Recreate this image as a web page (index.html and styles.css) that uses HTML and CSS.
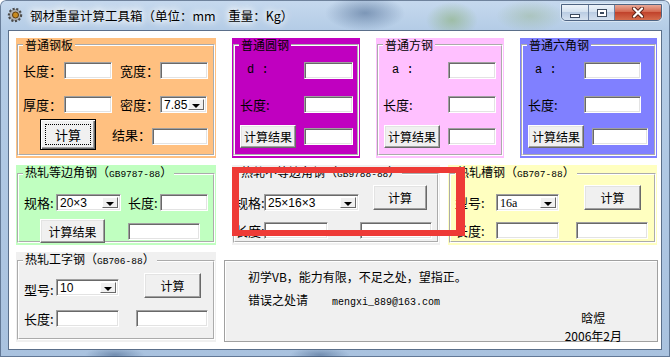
FILE: index.html
```html
<!DOCTYPE html>
<html>
<head>
    <meta charset="utf-8">
    <title>钢材重量计算工具箱</title>
    <link rel="stylesheet" href="styles.css">
</head>
<body>
    <div class="window">
        <div class="titlebar">
            <svg class="app-icon" width="16" height="16" viewBox="0 0 16 16">
                <circle cx="8" cy="8" r="6" fill="#9a9a9a" stroke="#4a4a4a" stroke-width="2.4" stroke-dasharray="2 1.6"/>
                <circle cx="8" cy="8" r="5" fill="#b0b0b0"/>
                <circle cx="8.5" cy="8" r="3" fill="#c98a1e" stroke="#5a3a10" stroke-width="1"/>
            </svg>
            <div class="title">钢材重量计算工具箱（单位：mm　重量：Kg）</div>
            <div class="caption-btns">
                <div class="cb cb-min"><i></i></div>
                <div class="cb cb-max"><i></i></div>
                <div class="cb cb-close">
                    <svg width="14" height="11" viewBox="0 0 14 11">
                        <path d="M3 1.5 L11 9.5 M11 1.5 L3 9.5" stroke="#5a2218" stroke-width="4" stroke-linecap="round"/>
                        <path d="M3 1.5 L11 9.5 M11 1.5 L3 9.5" stroke="#fff" stroke-width="2.2" stroke-linecap="round"/>
                    </svg>
                </div>
            </div>
        </div>

        <div class="client">
            <!-- first row: plate, round, square, hexagon -->
            <div class="row row1">
                <div class="group plate w200">
                    <fieldset>
                        <legend>普通钢板</legend>
                        <div class="r mt10">
                            <span class="lbl ml4 w41">长度：</span>
                            <input class="txt w48">
                            <span class="lbl ml8 w40">宽度：</span>
                            <input class="txt w48">
                        </div>
                        <div class="r mt17">
                            <span class="lbl ml4 w41">厚度：</span>
                            <input class="txt w48">
                            <span class="lbl ml8 w40">密度：</span>
                            <div class="combo w47"><span>7.85</span><i class="drop"></i></div>
                        </div>
                        <div class="r mt6">
                            <button class="btn default ml21 w56 h31">计算</button>
                            <span class="lbl ml16 w40">结果：</span>
                            <input class="txt w56 mt4">
                        </div>
                    </fieldset>
                </div>

                <div class="group round w128">
                    <fieldset>
                        <legend>普通圆钢</legend>
                        <div class="r mt10">
                            <span class="lbl mono ml12 w57">d :</span>
                            <input class="txt w49">
                        </div>
                        <div class="r mt17">
                            <span class="lbl ml5 w64">长度:</span>
                            <input class="txt w49">
                        </div>
                        <div class="r mt12">
                            <button class="btn ml5 w56 h23">计算结果</button>
                            <input class="txt ml8 w49">
                        </div>
                    </fieldset>
                </div>

                <div class="group square w128">
                    <fieldset>
                        <legend>普通方钢</legend>
                        <div class="r mt10">
                            <span class="lbl mono ml13 w56">a :</span>
                            <input class="txt w48">
                        </div>
                        <div class="r mt17">
                            <span class="lbl ml4 w65">长度:</span>
                            <input class="txt w48">
                        </div>
                        <div class="r mt12">
                            <button class="btn ml5 w56 h23">计算结果</button>
                            <input class="txt ml8 w48">
                        </div>
                    </fieldset>
                </div>

                <div class="group hexagon w137">
                    <fieldset>
                        <legend>普通六角钢</legend>
                        <div class="r mt10">
                            <span class="lbl mono ml12 w49">a :</span>
                            <input class="txt w57">
                        </div>
                        <div class="r mt17">
                            <span class="lbl ml5 w56">长度:</span>
                            <input class="txt w57">
                        </div>
                        <div class="r mt12">
                            <button class="btn ml5 w56 h23">计算结果</button>
                            <input class="txt ml8 w56">
                        </div>
                    </fieldset>
                </div>
            </div>

            <!-- second row: angles and channel -->
            <div class="row row2">
                <div class="group angle w200">
                    <fieldset>
                        <legend>热轧等边角钢（<span class="gb">GB9787-88</span>）</legend>
                        <div class="r mt12">
                            <span class="lbl ml5 w32">规格:</span>
                            <div class="combo w65"><span>20×3</span><i class="drop"></i></div>
                            <span class="lbl ml7 w32">长度:</span>
                            <input class="txt w48">
                        </div>
                        <div class="r mt8">
                            <button class="btn ml21 w65 h24">计算结果</button>
                            <input class="txt ml23 w72">
                        </div>
                    </fieldset>
                </div>

                <div class="group plain ml8 w208">
                    <fieldset>
                        <legend>热轧不等边角钢（<span class="gb">GB9788-88</span>）</legend>
                        <div class="r end mt3">
                            <span class="lbl w29">规格:</span>
                            <div class="combo w95"><span>25×16×3</span><i class="drop"></i></div>
                            <button class="btn ml14 w54 h25 mb1">计算</button>
                        </div>
                        <div class="r mt11">
                            <span class="lbl w29">长度:</span>
                            <input class="txt w64">
                            <input class="txt ml32 w72">
                        </div>
                    </fieldset>
                </div>

                <div class="group channel w209">
                    <fieldset>
                        <legend>热轧槽钢（<span class="gb">GB707-88</span>）</legend>
                        <div class="r end mt3">
                            <span class="lbl ml4 w41">型号:</span>
                            <div class="combo w63"><span class="serif">16a</span><i class="drop"></i></div>
                            <button class="btn ml25 w57 h25 mb1">计算</button>
                        </div>
                        <div class="r mt11">
                            <span class="lbl ml4 w41">长度:</span>
                            <input class="txt w63">
                            <input class="txt ml17 w72">
                        </div>
                    </fieldset>
                </div>
            </div>

            <!-- third row: I-beam and notes -->
            <div class="row row3">
                <div class="group plain w200">
                    <fieldset>
                        <legend>热轧工字钢（<span class="gb">GB706-88</span>）</legend>
                        <div class="r end mt4">
                            <span class="lbl ml5 w32">型号:</span>
                            <div class="combo w63 mb2"><span>10</span><i class="drop"></i></div>
                            <button class="btn ml25 w57 h25">计算</button>
                        </div>
                        <div class="r mt12">
                            <span class="lbl ml5 w32">长度:</span>
                            <input class="txt w63">
                            <input class="txt ml17 w72">
                        </div>
                    </fieldset>
                </div>

                <div class="note">
                    <div>初学VB，能力有限，不足之处，望指正。</div>
                    <div class="note-line">错误之处请<span class="email">mengxi_889@163.com</span></div>
                    <div class="sign">
                        <div>晗煜</div>
                        <div class="date">2006年2月</div>
                    </div>
                </div>
            </div>

            <div class="highlight"></div>
        </div>
    </div>
</body>
</html>
```

FILE: styles.css
```css
* {
    box-sizing: border-box;
}

body {
    margin: 0;
    background: #fff;
    font-family: "Noto Sans CJK SC", sans-serif;
    color: #000;
}

.window {
    width: 670px;
    height: 357px;
    display: flex;
    flex-direction: column;
    border-radius: 6px 6px 0 0;
    overflow: hidden;
    box-shadow: inset 0 0 0 1px rgba(40, 60, 90, 0.55);
    background:
        radial-gradient(ellipse 40px 18px at 365px 13px, rgba(70, 100, 140, 0.55), transparent),
        radial-gradient(ellipse 26px 18px at 452px 20px, rgba(130, 170, 100, 0.5), transparent),
        radial-gradient(ellipse 34px 16px at 530px 16px, rgba(150, 180, 140, 0.45), transparent),
        radial-gradient(ellipse 30px 8px at 115px 355px, rgba(60, 90, 130, 0.5), transparent),
        radial-gradient(ellipse 30px 8px at 320px 355px, rgba(60, 90, 130, 0.5), transparent),
        linear-gradient(180deg, #c6d9ee 0, #b4cce6 30px, #a9c2df 100%);
}

/* title bar */
.titlebar {
    height: 30px;
    flex: none;
    display: flex;
    align-items: center;
    padding-left: 7px;
}

.app-icon {
    flex: none;
}

.title {
    margin-left: 7px;
    font-size: 12.5px;
    line-height: 15px;
    white-space: nowrap;
    text-shadow: 0 0 6px #fff, 0 0 10px #fff, 0 0 12px rgba(255, 255, 255, 0.8);
}

.caption-btns {
    display: flex;
    align-self: flex-start;
    margin: 4px 8px 0 auto;
    height: 17px;
    border: 1px solid #4f6482;
    border-radius: 0 0 5px 5px;
    overflow: hidden;
    box-shadow: 0 0 0 1px rgba(255, 255, 255, 0.45);
}

.cb {
    height: 100%;
    display: flex;
    align-items: center;
    justify-content: center;
}

.cb-min,
.cb-max {
    border-right: 1px solid #6c81a0;
    background: linear-gradient(#eef3fa, #d5e2f0 45%, #bbcde3 50%, #d5e1ef);
}

.cb-min {
    width: 27px;
}

.cb-max {
    width: 26px;
}

.cb-min i {
    width: 10px;
    height: 4px;
    margin-top: 6px;
    background: #fff;
    border: 1px solid #3b4a5e;
}

.cb-max i {
    width: 10px;
    height: 8px;
    border: 1px solid #3b4a5e;
    box-shadow: inset 0 0 0 2px #fff;
    background: #3b4a5e;
}

.cb-close {
    width: 46px;
    background: linear-gradient(#e9a898, #d4694f 45%, #c1432c 50%, #d56c4c);
}

/* client area */
.client {
    position: relative;
    flex: none;
    height: 320px;
    margin: 0 8px;
    padding: 7px 0 0 7px;
    background: #fff;
    border: 1px solid #5b6f8a;
}

.row {
    display: flex;
}

.row1 {
    height: 120px;
    gap: 16px;
}

.row2 {
    height: 80px;
    gap: 8px;
    margin-top: 7px;
}

.row3 {
    height: 90px;
    margin-top: 7px;
    align-items: flex-start;
}

.group {
    height: 100%;
    flex: none;
    padding: 0 1px 2px;
}

.group fieldset {
    height: 100%;
    min-width: 0;
    margin: 0;
    padding: 0;
    border: 2px groove #fff;
}

.group legend {
    margin-left: 4px;
    padding: 0 2px;
    font-size: 12px;
    line-height: 14px;
    white-space: nowrap;
}

.gb {
    font-family: "Liberation Mono", monospace;
    font-size: 9.5px;
}

.plate   { background: #ffc080; }
.round   { background: #c000c0; }
.square  { background: #ffc0ff; }
.hexagon { background: #8080ff; }
.angle   { background: #c0ffc0; }
.channel { background: #ffffc0; }
.plain   { background: #f0f0f0; }

/* control rows */
.r {
    display: flex;
    align-items: center;
}

.r.end {
    align-items: flex-end;
}

.lbl {
    flex: none;
    font-size: 13px;
    line-height: 17px;
    white-space: nowrap;
}

.lbl.mono {
    font-family: "Liberation Mono", monospace;
    font-size: 12px;
}

.txt {
    flex: none;
    height: 17px;
    padding: 0;
    margin: 0;
    font-size: 12px;
    background: #fff;
    border: 1px solid;
    border-color: #a0a0a0 #fff #fff #a0a0a0;
    box-shadow: inset 1px 1px 0 #696969, inset -1px -1px 0 #e3e3e3;
    outline: none;
}

.combo {
    flex: none;
    display: flex;
    align-items: center;
    height: 17px;
    padding: 1px 2px 1px 1px;
    background: #fff;
    border: 1px solid;
    border-color: #a0a0a0 #fff #fff #a0a0a0;
    box-shadow: inset 1px 1px 0 #696969, inset -1px -1px 0 #e3e3e3;
}

.combo span {
    flex: 1;
    min-width: 0;
    padding-left: 2px;
    font-family: "Liberation Sans", "Noto Sans CJK SC", sans-serif;
    font-size: 12px;
    line-height: 14px;
    white-space: nowrap;
}

.combo span.serif {
    font-family: "Liberation Serif", serif;
}

.drop {
    position: relative;
    align-self: stretch;
    width: 16px;
    flex: none;
    margin: 1px 0;
    background: #f0f0f0;
    border: 1px solid;
    border-color: #fff #696969 #696969 #fff;
}

.drop::after {
    content: "";
    position: absolute;
    left: 3px;
    top: 4px;
    border-left: 4px solid transparent;
    border-right: 4px solid transparent;
    border-top: 4px solid #000;
}

.btn {
    flex: none;
    position: relative;
    padding: 0;
    font-family: "Noto Sans CJK SC", sans-serif;
    font-size: 12px;
    color: #000;
    background: #f0f0f0;
    border: 1px solid;
    border-color: #fff #696969 #696969 #fff;
    box-shadow: inset -1px -1px 0 #a0a0a0, inset 1px 1px 0 #e3e3e3;
}

.btn.default {
    font-size: 13px;
    border-color: #000;
    box-shadow: inset 1px 1px 0 #fff, inset -1px -1px 0 #696969, inset -2px -2px 0 #a0a0a0;
}

.btn.default::after {
    content: "";
    position: absolute;
    inset: 4px;
    border: 1px dotted #000;
}

/* notes panel */
.note {
    flex: none;
    display: flex;
    flex-direction: column;
    width: 434px;
    height: 82px;
    margin: 8px 0 0 8px;
    padding: 8px 0 0 23px;
    font-size: 12px;
    line-height: 16px;
    background: #f0f0f0;
    border: 1px solid #a0a0a0;
    box-shadow: inset 1px 1px 0 #fff;
}

.note-line {
    margin-top: 7px;
}

.email {
    margin-left: 24px;
    font-family: "Liberation Mono", monospace;
    font-size: 10px;
}

.sign {
    align-self: flex-end;
    margin: -1px 35px 0 0;
    text-align: center;
}

.sign .date {
    margin-top: 2px;
}

/* red marker drawn over the screenshot */
.highlight {
    position: absolute;
    left: 223px;
    top: 136px;
    width: 233px;
    height: 69px;
    border: solid #ee3a36;
    border-width: 6px 9px 6px 7px;
}

/* spacing helpers */
.mt3  { margin-top: 3px; }
.mt4  { margin-top: 4px; }
.mt6  { margin-top: 6px; }
.mt8  { margin-top: 8px; }
.mt10 { margin-top: 10px; }
.mt11 { margin-top: 11px; }
.mt12 { margin-top: 12px; }
.mt17 { margin-top: 17px; }
.mb1  { margin-bottom: 1px; }
.mb2  { margin-bottom: 2px; }

.ml4  { margin-left: 4px; }
.ml5  { margin-left: 5px; }
.ml7  { margin-left: 7px; }
.ml8  { margin-left: 8px; }
.ml12 { margin-left: 12px; }
.ml13 { margin-left: 13px; }
.ml14 { margin-left: 14px; }
.ml16 { margin-left: 16px; }
.ml17 { margin-left: 17px; }
.ml21 { margin-left: 21px; }
.ml23 { margin-left: 23px; }
.ml25 { margin-left: 25px; }
.ml32 { margin-left: 32px; }

.w29  { width: 29px; }
.w32  { width: 32px; }
.w40  { width: 40px; }
.w41  { width: 41px; }
.w47  { width: 47px; }
.w48  { width: 48px; }
.w49  { width: 49px; }
.w54  { width: 54px; }
.w56  { width: 56px; }
.w57  { width: 57px; }
.w63  { width: 63px; }
.w64  { width: 64px; }
.w65  { width: 65px; }
.w72  { width: 72px; }
.w95  { width: 95px; }
.w128 { width: 128px; }
.w137 { width: 137px; }
.w200 { width: 200px; }
.w208 { width: 208px; }
.w209 { width: 209px; }

.h23 { height: 23px; }
.h24 { height: 24px; }
.h25 { height: 25px; }
.h31 { height: 31px; }
```
